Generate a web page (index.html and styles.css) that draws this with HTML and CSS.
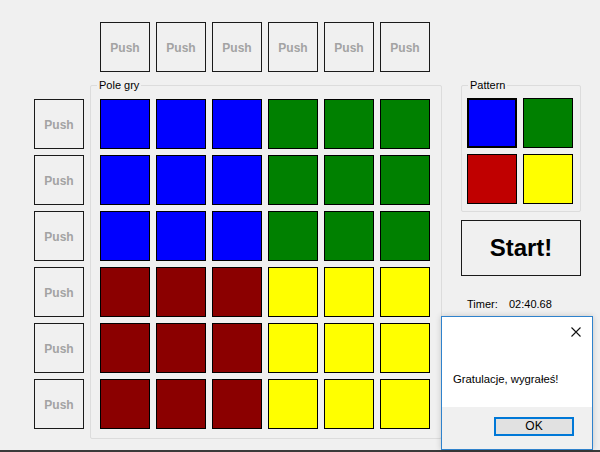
FILE: index.html
```html
<!DOCTYPE html>
<html>
<head>
<meta charset="utf-8">
<link rel="stylesheet" href="styles.css">
</head>
<body>
<div class="app">
  <div class="top-row">
    <button class="push">Push</button>
    <button class="push">Push</button>
    <button class="push">Push</button>
    <button class="push">Push</button>
    <button class="push">Push</button>
    <button class="push">Push</button>
  </div>
  <div class="main">
    <div class="left-col">
      <button class="push">Push</button>
      <button class="push">Push</button>
      <button class="push">Push</button>
      <button class="push">Push</button>
      <button class="push">Push</button>
      <button class="push">Push</button>
    </div>
    <div class="group board-group">
      <span class="group-label">Pole gry</span>
      <div class="board">
        <div class="cell blue"></div><div class="cell blue"></div><div class="cell blue"></div><div class="cell green"></div><div class="cell green"></div><div class="cell green"></div>
        <div class="cell blue"></div><div class="cell blue"></div><div class="cell blue"></div><div class="cell green"></div><div class="cell green"></div><div class="cell green"></div>
        <div class="cell blue"></div><div class="cell blue"></div><div class="cell blue"></div><div class="cell green"></div><div class="cell green"></div><div class="cell green"></div>
        <div class="cell darkred"></div><div class="cell darkred"></div><div class="cell darkred"></div><div class="cell yellow"></div><div class="cell yellow"></div><div class="cell yellow"></div>
        <div class="cell darkred"></div><div class="cell darkred"></div><div class="cell darkred"></div><div class="cell yellow"></div><div class="cell yellow"></div><div class="cell yellow"></div>
        <div class="cell darkred"></div><div class="cell darkred"></div><div class="cell darkred"></div><div class="cell yellow"></div><div class="cell yellow"></div><div class="cell yellow"></div>
      </div>
    </div>
    <div class="right-col">
      <div class="group pattern-group">
        <span class="group-label">Pattern</span>
        <div class="pattern">
          <div class="cell blue selected"></div>
          <div class="cell green"></div>
          <div class="cell red"></div>
          <div class="cell yellow"></div>
        </div>
      </div>
      <button class="start">Start!</button>
      <div class="timer"><span class="timer-label">Timer:</span><span>02:40.68</span></div>
    </div>
  </div>
  <div class="dialog">
    <div class="dlg-body">
      <div class="dlg-head">
        <svg width="10" height="10" viewBox="0 0 10 10"><path d="M0.5 0.5 L9.5 9.5 M9.5 0.5 L0.5 9.5" stroke="#111" stroke-width="1.1" fill="none"/></svg>
      </div>
      <div class="dlg-text">Gratulacje, wygrałeś!</div>
    </div>
    <div class="dlg-foot">
      <button class="ok">OK</button>
    </div>
  </div>
</div>
</body>
</html>
```
FILE: styles.css
```css
html, body {
  margin: 0;
  padding: 0;
}
body {
  width: 600px;
  height: 452px;
  overflow: hidden;
  background: #f0f0f0;
  font-family: "Liberation Sans", Arial, sans-serif;
}
.app {
  position: relative;
  box-sizing: border-box;
  height: 452px;
  padding-top: 22px;
  border-bottom: 2px solid #3a3a3a;
}
.top-row {
  display: flex;
  gap: 6px;
  margin-left: 100px;
}
.push {
  box-sizing: border-box;
  width: 50px;
  height: 50px;
  margin: 0;
  padding: 2px 0 0 0;
  border: 1px solid #1a1a1a;
  background: #f0f0f0;
  color: #a3a3a3;
  font-family: "Liberation Sans", Arial, sans-serif;
  font-weight: bold;
  font-size: 12px;
}
.main {
  display: flex;
}
.left-col {
  display: flex;
  flex-direction: column;
  gap: 6px;
  margin-left: 34px;
  margin-top: 27px;
}
.group {
  position: relative;
  box-sizing: border-box;
  border: 1px solid #dcdcdc;
  border-radius: 2px;
}
.group-label {
  position: absolute;
  top: -7px;
  left: 6px;
  padding: 0 2px;
  background: #f0f0f0;
  font-size: 11px;
  line-height: 13px;
  color: #000;
}
.board-group {
  margin-left: 6px;
  margin-top: 13px;
  width: 352px;
  height: 354px;
  padding: 13px 0 0 9px;
}
.board {
  display: grid;
  grid-template-columns: repeat(6, 50px);
  grid-auto-rows: 50px;
  gap: 6px;
}
.cell {
  box-sizing: border-box;
  border: 1px solid #000;
}
.blue { background: #0000ff; }
.green { background: #008000; }
.darkred { background: #8b0000; }
.red { background: #c00000; }
.yellow { background: #ffff00; }
.selected { border-width: 2px; }
.right-col {
  display: flex;
  flex-direction: column;
  margin-left: 19px;
  margin-top: 13px;
}
.pattern-group {
  width: 120px;
  height: 127px;
  padding: 12px 0 0 5px;
}
.pattern-group .group-label {
  left: 6px;
}
.pattern {
  display: grid;
  grid-template-columns: repeat(2, 50px);
  grid-auto-rows: 50px;
  gap: 6px;
}
.start {
  box-sizing: border-box;
  width: 120px;
  height: 56px;
  margin: 8px 0 0 0;
  padding: 0;
  border: 1px solid #1a1a1a;
  background: #f0f0f0;
  color: #000;
  font-family: "Liberation Sans", Arial, sans-serif;
  font-weight: bold;
  font-size: 24px;
}
.timer {
  margin-top: 22px;
  padding-left: 6px;
  font-size: 11px;
  line-height: 13px;
  color: #000;
}
.timer-label {
  display: inline-block;
  width: 42px;
}
.dialog {
  position: absolute;
  left: 441px;
  top: 316px;
  width: 152px;
  height: 134px;
  box-sizing: border-box;
  border: 1px solid #2f82cc;
  background: #f0f0f0;
  display: flex;
  flex-direction: column;
  box-shadow: 0 0 6px rgba(0,0,0,0.18);
}
.dlg-body {
  height: 90px;
  background: #fff;
}
.dlg-head {
  display: flex;
  justify-content: flex-end;
  padding: 10px 11px 0 0;
  height: 10px;
}
.dlg-text {
  margin-top: 35px;
  padding-left: 11px;
  font-size: 11.3px;
  line-height: 14px;
  color: #000;
  white-space: nowrap;
}
.dlg-foot {
  display: flex;
  justify-content: flex-end;
  padding: 10px 18px 0 0;
}
.ok {
  box-sizing: border-box;
  width: 80px;
  height: 19px;
  margin: 0;
  padding: 0;
  border: 2px solid #0078d7;
  background: #e1e1e1;
  color: #000;
  font-family: "Liberation Sans", Arial, sans-serif;
  font-size: 12px;
  line-height: 15px;
}
```
